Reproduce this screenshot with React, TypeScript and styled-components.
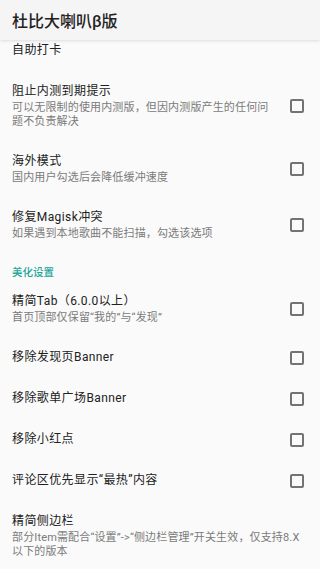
import styled, { createGlobalStyle } from "styled-components";

const GlobalStyle = createGlobalStyle`
  html, body {
    margin: 0;
    padding: 0;
    background: #fafafa;
  }
  body {
    font-family: Roboto, "Noto Sans CJK SC", sans-serif;
    -webkit-font-smoothing: antialiased;
  }
`;

type Pref = {
  title: string;
  summary?: string;
  checkbox?: boolean;
};

const general: Pref[] = [
  { title: "自助打卡" },
  {
    title: "阻止内测到期提示",
    summary: "可以无限制的使用内测版，但因内测版产生的任何问题不负责解决",
    checkbox: true,
  },
  { title: "海外模式", summary: "国内用户勾选后会降低缓冲速度", checkbox: true },
  {
    title: "修复Magisk冲突",
    summary: "如果遇到本地歌曲不能扫描，勾选该选项",
    checkbox: true,
  },
];

const beautify: Pref[] = [
  { title: "精简Tab（6.0.0以上）", summary: "首页顶部仅保留“我的”与“发现”", checkbox: true },
  { title: "移除发现页Banner", checkbox: true },
  { title: "移除歌单广场Banner", checkbox: true },
  { title: "移除小红点", checkbox: true },
  { title: "评论区优先显示“最热”内容", checkbox: true },
  {
    title: "精简侧边栏",
    summary: "部分Item需配合“设置”->“侧边栏管理”开关生效，仅支持8.X以下的版本",
  },
];

const Screen = styled.div`
  width: 320px;
  height: 569px;
  overflow: hidden;
  display: flex;
  flex-direction: column;
  background: #fafafa;
`;

const AppBar = styled.header`
  position: relative;
  z-index: 2;
  flex: 0 0 40px;
  display: flex;
  align-items: center;
  padding: 0 12px;
  background: #f5f5f5;
  box-shadow: 0 1px 3px rgba(0, 0, 0, 0.12);
`;

const AppTitle = styled.h1`
  margin: 0;
  font-size: 16px;
  font-weight: 500;
  color: #212121;
`;

// list is scrolled a little, first row sits under the bar
const List = styled.div`
  margin-top: -10px;
  display: flex;
  flex-direction: column;
`;

const Row = styled.div`
  display: flex;
  align-items: center;
  padding: 12px;
`;

const TextBlock = styled.div`
  flex: 1;
  min-width: 0;
`;

const Title = styled.div`
  font-size: 12px;
  letter-spacing: 0.4px;
  line-height: 17px;
  color: #212121;
`;

const Summary = styled.div`
  margin-top: 1px;
  font-size: 11px;
  letter-spacing: 0.15px;
  line-height: 14px;
  color: #7b7b7b;
`;

const Box = styled.span`
  flex: 0 0 auto;
  margin: 0 4px 0 20px;
  width: 10px;
  height: 10px;
  border: 2px solid #737373;
  border-radius: 2px;
`;

const Category = styled.div`
  padding: 12px 12px 0;
  height: 16px;
  font-size: 10.5px;
  font-weight: 500;
  line-height: 16px;
  color: #26a69a;
`;

function PrefRow({ title, summary, checkbox }: Pref) {
  return (
    <Row>
      <TextBlock>
        <Title>{title}</Title>
        {summary && <Summary>{summary}</Summary>}
      </TextBlock>
      {checkbox && <Box />}
    </Row>
  );
}

export default function App() {
  return (
    <>
      <GlobalStyle />
      <Screen>
        <AppBar>
          <AppTitle>杜比大喇叭β版</AppTitle>
        </AppBar>
        <List>
          {general.map((p) => (
            <PrefRow key={p.title} {...p} />
          ))}
          <Category>美化设置</Category>
          {beautify.map((p) => (
            <PrefRow key={p.title} {...p} />
          ))}
        </List>
      </Screen>
    </>
  );
}
